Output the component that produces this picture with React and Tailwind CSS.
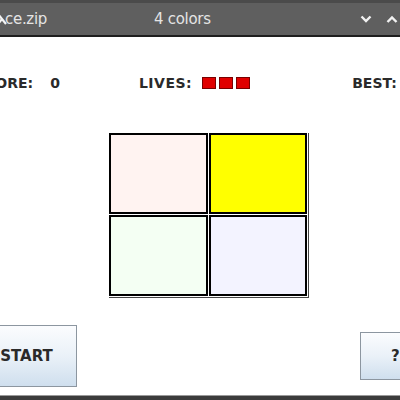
import React from "react";

const font = { fontFamily: '"DejaVu Sans", "Liberation Sans", sans-serif' };

function Chevron({ up }) {
  return (
    <svg width="12" height="8" viewBox="0 0 12 8" className="block">
      <path
        d={up ? "M1.5 7 L6 2.5 L10.5 7" : "M1.5 1.5 L6 6 L10.5 1.5"}
        fill="none"
        stroke="#f2f2f2"
        strokeWidth="2.4"
      />
    </svg>
  );
}

function Cell({ color }) {
  return <div className={`border-2 border-black ${color}`} />;
}

export default function App() {
  return (
    <div className="w-[400px] h-[400px] overflow-hidden bg-white flex flex-col" style={font}>
      {/* title bar */}
      <div className="h-[37px] shrink-0 bg-[#5f5f5f] border-t-[3px] border-t-[#4b4b4b] border-b-2 border-b-[#1e1e1e] flex items-center text-[#e4e4e4] text-[15px]">
        <svg width="10" height="14" viewBox="0 0 10 14" className="ml-[-2px]">
          <path d="M0 2 L8 12 M0 12 L4 7" stroke="#f4f4f4" strokeWidth="2.2" fill="none" />
        </svg>
        <span className="ml-[-3px] tracking-[-0.3px]">ce.zip</span>
        <span className="ml-[107px] tracking-[-0.3px]">4 colors</span>
        <div className="ml-auto flex items-center gap-[14px] mr-[2px]">
          <Chevron />
          <Chevron up />
        </div>
      </div>

      {/* body */}
      <div className="flex-1 flex flex-col text-[#2a2a2a] font-bold text-[14px]">
        <div className="flex items-center h-[16px] mt-[38px] whitespace-nowrap">
          <span className="ml-[-25px]">SCORE:</span>
          <span className="ml-[17px]">0</span>
          <span className="ml-[79px] tracking-[0.5px]">LIVES:</span>
          <div className="ml-[10px] flex gap-[3px]">
            <div className="w-[14px] h-[12px] bg-[#e00000] border border-[#7a0000]" />
            <div className="w-[14px] h-[12px] bg-[#e00000] border border-[#7a0000]" />
            <div className="w-[14px] h-[12px] bg-[#e00000] border border-[#7a0000]" />
          </div>
          <span className="ml-[102px]">BEST:</span>
        </div>

        <div className="ml-[109px] mt-[42px] w-[200px] h-[165px] border-r border-b border-[#444] pr-[1px] pb-[1px]">
          <div className="grid grid-cols-2 grid-rows-2 gap-[1px] w-full h-full">
            <Cell color="bg-[#fff3f1]" />
            <Cell color="bg-[#ffff00]" />
            <Cell color="bg-[#f4fff3]" />
            <Cell color="bg-[#f3f3ff]" />
          </div>
        </div>

        <div className="flex items-center mt-[27px] h-[62px]">
          <div className="ml-[-30px] w-[107px] h-[62px] border border-[#8c96a0] bg-gradient-to-b from-[#fbfcfe] via-[#eaf1f8] to-[#cfdfee] flex items-center justify-center pl-[6px] text-[15px]">
            START
          </div>
          <div className="ml-auto mr-[-30px] w-[70px] h-[48px] border border-[#8c96a0] bg-gradient-to-b from-[#fbfcfe] via-[#eaf1f8] to-[#cfdfee] flex items-center pl-[30px] text-[15px]">
            ?
          </div>
        </div>

        <div className="mt-auto h-[5px] border-t border-[#9a9a9a] bg-[#3c3c3c]" />
      </div>
    </div>
  );
}
